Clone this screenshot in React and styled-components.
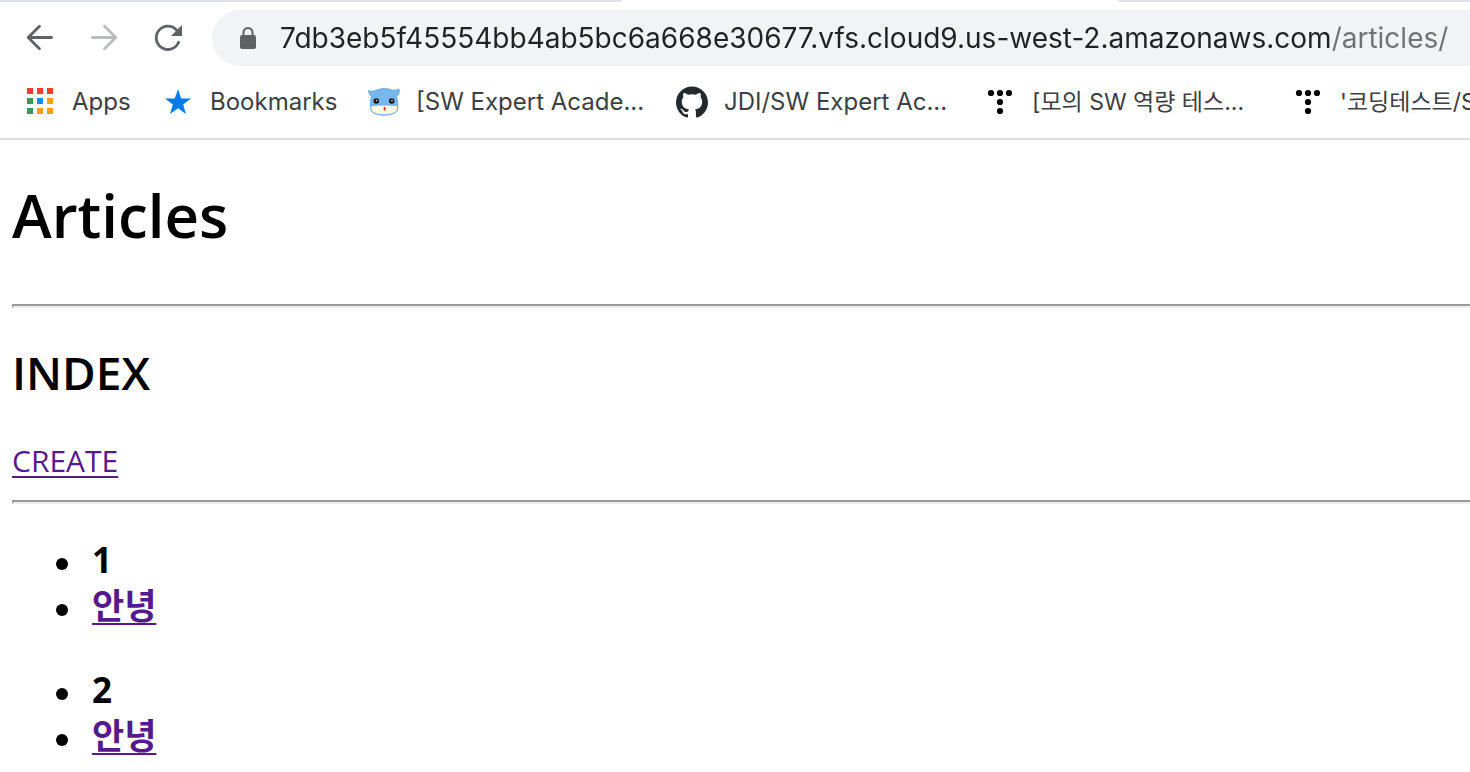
import React from 'react';
import styled, { createGlobalStyle } from 'styled-components';

const GlobalStyle = createGlobalStyle`
  *, *::before, *::after { box-sizing: border-box; }
  body {
    margin: 0;
    background: #fff;
    color: #000;
    font-family: "Open Sans", "Noto Sans CJK KR", sans-serif;
  }
`;

const Chrome = styled.header`
  display: flex;
  flex-direction: column;
  border-bottom: 2px solid #dadce0;
  font-family: Inter, "Noto Sans CJK KR", sans-serif;
`;

const TabStrip = styled.div`
  display: flex;
  justify-content: space-between;
  height: 2px;
`;

const TabEdge = styled.span`
  flex: ${(p) => p.$grow} 0 0;
  background: ${(p) => (p.$active ? '#fff' : '#dee1e6')};
  border-radius: ${(p) => p.$radius || '0'};
`;

const Toolbar = styled.div`
  display: flex;
  align-items: center;
  padding-top: 8px;
  padding-left: 8px;
`;

const NavButton = styled.button`
  display: grid;
  place-items: center;
  width: 64px;
  height: 56px;
  padding: 0;
  border: 0;
  background: none;
  color: #5f6368;
  &:disabled { color: #babcbe; }
`;

const Omnibox = styled.label`
  flex: 1;
  min-width: 0;
  display: flex;
  align-items: center;
  gap: 16px;
  height: 56px;
  margin-left: 12px;
  padding-left: 20px;
  border-radius: 28px 0 0 28px;
  background: #f1f3f4;
`;

const Address = styled.input`
  flex: 1;
  min-width: 0;
  height: 40px;
  padding: 0;
  border: 0;
  outline: 0;
  font: 400 28px/40px Inter, sans-serif;
  color: #202124;
  background: linear-gradient(to right, #202124 1051px, #6f7275 1051px);
  background-clip: text;
  -webkit-text-fill-color: transparent;
`;

const BookmarkBar = styled.nav`
  display: flex;
  align-items: center;
  gap: 36px;
  height: 72px;
  padding-left: 24px;
  overflow: hidden;
`;

const Bookmark = styled.a`
  flex: none;
  display: flex;
  align-items: center;
  gap: 16px;
  width: ${(p) => p.$width};
  color: #3c4043;
  font-size: ${(p) => (p.lang === 'ko' ? '23px' : '24px')};
  line-height: 32px;
  white-space: nowrap;
  text-decoration: none;
  svg { flex: none; }
`;

const Page = styled.main`
  padding-left: 12px;
`;

const Title = styled.h1`
  margin: 32px 0 46px;
  font-size: 60px;
  line-height: 86px;
  font-weight: 600;
`;

const Subtitle = styled.h2`
  margin: 32px 0 36px;
  font-size: 46px;
  line-height: 64px;
  font-weight: 600;
`;

const Rule = styled.hr`
  height: 4px;
  margin: 0;
  border: 2px solid;
  border-color: #9a9a9a #eee #eee #9a9a9a;
  border-right: 0;
`;

const VisitedLink = styled.a`
  color: #551a8b;
  text-decoration: underline;
  text-decoration-thickness: 2px;
  text-underline-offset: 4px;
  text-decoration-skip-ink: none;
`;

const Actions = styled.div`
  margin-bottom: 18px;
  font-size: 30px;
  line-height: 42px;
`;

const ArticleList = styled.ul`
  margin: 33px 0 38px;
  padding-left: 44px;
  list-style: none;
  font-size: 35px;
  line-height: 46px;
  font-weight: 700;
`;

const ArticleField = styled.li`
  display: flex;
  align-items: center;
  gap: 24px;
  height: 46px;
  &::before {
    content: "";
    width: 12px;
    height: 12px;
    margin-top: 8px;
    border-radius: 50%;
    background: #000;
  }
`;

const BackIcon = () => (
  <svg width="32" height="32" viewBox="0 0 32 32" fill="none" stroke="currentColor" strokeWidth="2.8" strokeLinecap="round" strokeLinejoin="round">
    <path d="M27.5 15.5H4.5M15.5 4.2 4.2 15.5 15.5 26.8" />
  </svg>
);

const ForwardIcon = () => (
  <svg width="32" height="32" viewBox="0 0 32 32" fill="none" stroke="currentColor" strokeWidth="2.8" strokeLinecap="round" strokeLinejoin="round">
    <path d="M4.5 15.5H27.5M16.5 4.2 27.8 15.5 16.5 26.8" />
  </svg>
);

const ReloadIcon = () => (
  <svg width="32" height="32" viewBox="0 0 32 32" fill="none" stroke="currentColor" strokeWidth="2.8" strokeLinecap="round">
    <path d="M26.600 20.200A11.600 11.600 0 1 1 24.600 8.200" />
    <path d="M30 3V14H19Z" fill="currentColor" stroke="none" />
  </svg>
);

const LockIcon = () => (
  <svg width="32" height="32" viewBox="0 0 32 32">
    <path d="M11.5 14V10.500a4.500 4.500 0 0 1 9 0V14" fill="none" stroke="#5f6163" strokeWidth="2" />
    <rect x="8" y="13" width="16" height="14" rx="2" fill="#5f6163" />
  </svg>
);

const APP_COLORS = ['#f93a31', '#f93a31', '#f93a31', '#36985a', '#0a8ef5', '#f4a01c', '#36985a', '#f4a01c', '#f4a01c'];

const AppsIcon = () => (
  <svg width="32" height="32" viewBox="0 0 32 32">
    {APP_COLORS.map((color, i) => (
      <rect key={i} x={3 + (i % 3) * 10} y={2 + Math.floor(i / 3) * 10} width="6" height="6" fill={color} />
    ))}
  </svg>
);

const StarIcon = () => (
  <svg width="32" height="32" viewBox="0 0 32 32">
    <path d="M16 3 19.200 12.400H29L21.200 18.400 24 28 16 22.300 8 28 10.800 18.400 3 12.400H12.800Z" fill="#007aec" />
  </svg>
);

const MascotIcon = () => (
  <svg width="32" height="32" viewBox="0 0 32 32">
    <path d="M.5 4.500C3 5.500 5 5 7.500 4.500C13 2 20 2 24.500 4.200C27 4.500 29 3.500 31 3C32 6 31 8.500 28.500 10.500C30 15 30.500 21 29 25C25 30.500 7 30.500 3.500 25C2 20 2 15 3.500 10.500C1.500 9 .5 6.500 .5 4.500Z" fill="#78b7eb" stroke="#5fa8e2" strokeWidth=".8" />
    <path d="M2.700 19.800C10 18.800 22 18.800 29.600 19.800C29.800 22 29.500 24 28.500 25.500C24 30 8 30 4 25.500C3 23.500 2.700 21.500 2.700 19.800Z" fill="#fffbe0" stroke="#5fa8e2" strokeWidth=".8" />
    <circle cx="8.300" cy="15" r="2.800" fill="#14181c" />
    <circle cx="23.700" cy="15" r="2.800" fill="#14181c" />
    <circle cx="8.600" cy="14.500" r=".8" fill="#fff" />
    <circle cx="24" cy="14.500" r=".8" fill="#fff" />
    <ellipse cx="16.600" cy="22.700" rx="1" ry="2" fill="#e3262e" />
  </svg>
);

const GithubIcon = () => (
  <svg width="32" height="32" viewBox="0 0 24 24" fill="#24292e">
    <path d="M12 .297c-6.63 0-12 5.373-12 12 0 5.303 3.438 9.8 8.205 11.385.6.113.82-.258.82-.577 0-.285-.01-1.04-.015-2.04-3.338.724-4.042-1.61-4.042-1.61C4.422 18.07 3.633 17.7 3.633 17.7c-1.087-.744.084-.729.084-.729 1.205.084 1.838 1.236 1.838 1.236 1.07 1.835 2.809 1.305 3.495.998.108-.776.417-1.305.76-1.605-2.665-.3-5.466-1.332-5.466-5.93 0-1.31.465-2.38 1.235-3.22-.135-.303-.54-1.523.105-3.176 0 0 1.005-.322 3.3 1.23.96-.267 1.98-.399 3-.405 1.02.006 2.04.138 3 .405 2.28-1.552 3.285-1.23 3.285-1.23.645 1.653.24 2.873.12 3.176.765.84 1.23 1.91 1.23 3.22 0 4.61-2.805 5.625-5.475 5.92.42.36.81 1.096.81 2.22 0 1.606-.015 2.896-.015 3.286 0 .315.21.69.825.57C20.565 22.092 24 17.592 24 12.297c0-6.627-5.373-12-12-12" />
  </svg>
);

const DOTS = [[7, 7], [16, 7], [25, 7], [16, 16], [16, 25]];

const TistoryIcon = () => (
  <svg width="32" height="32" viewBox="0 0 32 32">
    {DOTS.map(([x, y]) => <circle key={`${x}-${y}`} cx={x} cy={y} r="3.1" />)}
  </svg>
);

const BOOKMARKS = [
  { label: 'Apps', icon: AppsIcon, width: '102px' },
  { label: 'Bookmarks', icon: StarIcon, width: '170px' },
  { label: '[SW Expert Acade...', icon: MascotIcon, width: '272px' },
  { label: 'JDI/SW Expert Ac...', icon: GithubIcon, width: '272px' },
  { label: '[모의 SW 역량 테스...', icon: TistoryIcon, width: '272px', lang: 'ko' },
  { label: "'코딩테스트/S", icon: TistoryIcon, width: '272px', lang: 'ko' },
];

const ARTICLES = [{ id: 1, title: '안녕' }, { id: 2, title: '안녕' }];

export default function App() {
  return (
    <>
      <GlobalStyle />
      <Chrome>
        <TabStrip>
          <TabEdge $grow={622} $radius="0 0 8px 0" />
          <TabEdge $grow={496} $active />
          <TabEdge $grow={352} $radius="0 0 0 8px" />
        </TabStrip>
        <Toolbar>
          <NavButton aria-label="Back"><BackIcon /></NavButton>
          <NavButton aria-label="Forward" disabled><ForwardIcon /></NavButton>
          <NavButton aria-label="Reload"><ReloadIcon /></NavButton>
          <Omnibox>
            <LockIcon />
            <Address
              aria-label="Address"
              spellCheck={false}
              defaultValue="7db3eb5f45554bb4ab5bc6a668e30677.vfs.cloud9.us-west-2.amazonaws.com/articles/"
            />
          </Omnibox>
        </Toolbar>
        <BookmarkBar aria-label="Bookmarks">
          {BOOKMARKS.map(({ label, icon: Icon, width, lang }) => (
            <Bookmark key={label} href="#" lang={lang} $width={width}>
              <Icon />
              {label}
            </Bookmark>
          ))}
        </BookmarkBar>
      </Chrome>
      <Page>
        <Title>Articles</Title>
        <Rule />
        <Subtitle>INDEX</Subtitle>
        <Actions><VisitedLink href="#create">CREATE</VisitedLink></Actions>
        <Rule />
        {ARTICLES.map(({ id, title }) => (
          <ArticleList key={id}>
            <ArticleField>{id}</ArticleField>
            <ArticleField><VisitedLink href={`#${id}`}>{title}</VisitedLink></ArticleField>
          </ArticleList>
        ))}
      </Page>
    </>
  );
}
